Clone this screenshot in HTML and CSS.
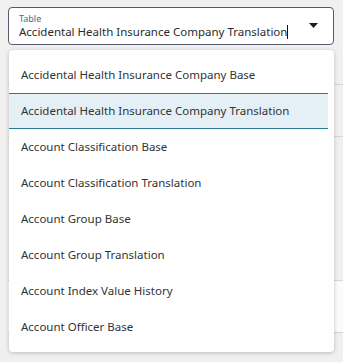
FILE: index.html
```html
<!DOCTYPE html>
<html lang="en">
<head>
    <meta charset="UTF-8">
    <meta name="viewport" content="width=device-width, initial-scale=1.0">
    <title>Table Select</title>
    <link rel="stylesheet" href="styles.css">
</head>
<body>
    <div class="page">
        <div class="select-field">
            <div class="field-text">
                <label class="field-label">Table</label>
                <div class="field-value">Accidental Health Insurance Company Translation<span class="cursor"></span></div>
            </div>
            <svg class="field-arrow" width="9" height="5" viewBox="0 0 9 5">
                <path d="M0 0 L9 0 L4.5 5 Z" fill="#1d1d1d"/>
            </svg>
        </div>

        <!-- form rows behind the open list -->
        <div class="backdrop">
            <div class="backdrop-row row-a"></div>
            <div class="backdrop-row row-b"></div>
            <div class="backdrop-card"></div>
        </div>

        <ul class="dropdown">
            <li class="dropdown-item">Accidental Health Insurance Company Base</li>
            <li class="dropdown-item selected">Accidental Health Insurance Company Translation</li>
            <li class="dropdown-item">Account Classification Base</li>
            <li class="dropdown-item">Account Classification Translation</li>
            <li class="dropdown-item">Account Group Base</li>
            <li class="dropdown-item">Account Group Translation</li>
            <li class="dropdown-item">Account Index Value History</li>
            <li class="dropdown-item">Account Officer Base</li>
        </ul>
    </div>
</body>
</html>
```

FILE: styles.css
```css
body {
    margin: 0;
    padding: 0;
    background-color: #f1f0ee;
    font-family: "Noto Sans", Arial, sans-serif;
    color: #333;
}

.page {
    position: relative;
    padding: 7px 9px 0 8px;
    height: 355px;
}

.select-field {
    display: flex;
    align-items: center;
    height: 38px;
    box-sizing: border-box;
    border: 1px solid #545b6e;
    border-radius: 4px;
    background-color: #fff;
    padding: 0 15px 0 10px;
}

.field-text {
    flex-grow: 1;
    min-width: 0;
    display: flex;
    flex-direction: column;
    padding-top: 1px;
}

.field-label {
    font-size: 9px;
    line-height: 11px;
    color: #1f7a9a;
}

.field-value {
    font-size: 11.5px;
    line-height: 16px;
    color: #2b2b2b;
    white-space: nowrap;
    overflow: hidden;
}

.cursor {
    display: inline-block;
    width: 1px;
    height: 14px;
    background-color: #111;
    vertical-align: -3px;
}

.field-arrow {
    flex-shrink: 0;
    margin-top: -1px;
}

.backdrop {
    margin-right: -9px;
}

.backdrop-row {
    border-bottom: 1px solid #d9d7d4;
}

.row-a {
    height: 39px;
}

.row-b {
    height: 51px;
}

.backdrop-card {
    margin-top: 143px;
    height: 51px;
    background-color: #fbfbfa;
    border-top: 1px solid #d9d7d4;
    border-bottom: 1px solid #d9d7d4;
}

.dropdown {
    position: absolute;
    top: 50px;
    left: 9px;
    width: 325px;
    box-sizing: border-box;
    margin: 0;
    padding: 7px 6px 7px 0;
    list-style: none;
    background-color: #fff;
    border-radius: 4px;
    box-shadow: 0 1px 4px rgba(0, 0, 0, 0.22);
}

.dropdown-item {
    height: 36px;
    box-sizing: border-box;
    display: flex;
    align-items: center;
    padding: 0 0 2px 12px;
    font-size: 11.5px;
    color: #333;
    white-space: nowrap;
}

.dropdown-item.selected {
    background-color: #e4f0f5;
    border-top: 1px solid #2a7a9c;
    border-bottom: 1px solid #2a7a9c;
}
```
